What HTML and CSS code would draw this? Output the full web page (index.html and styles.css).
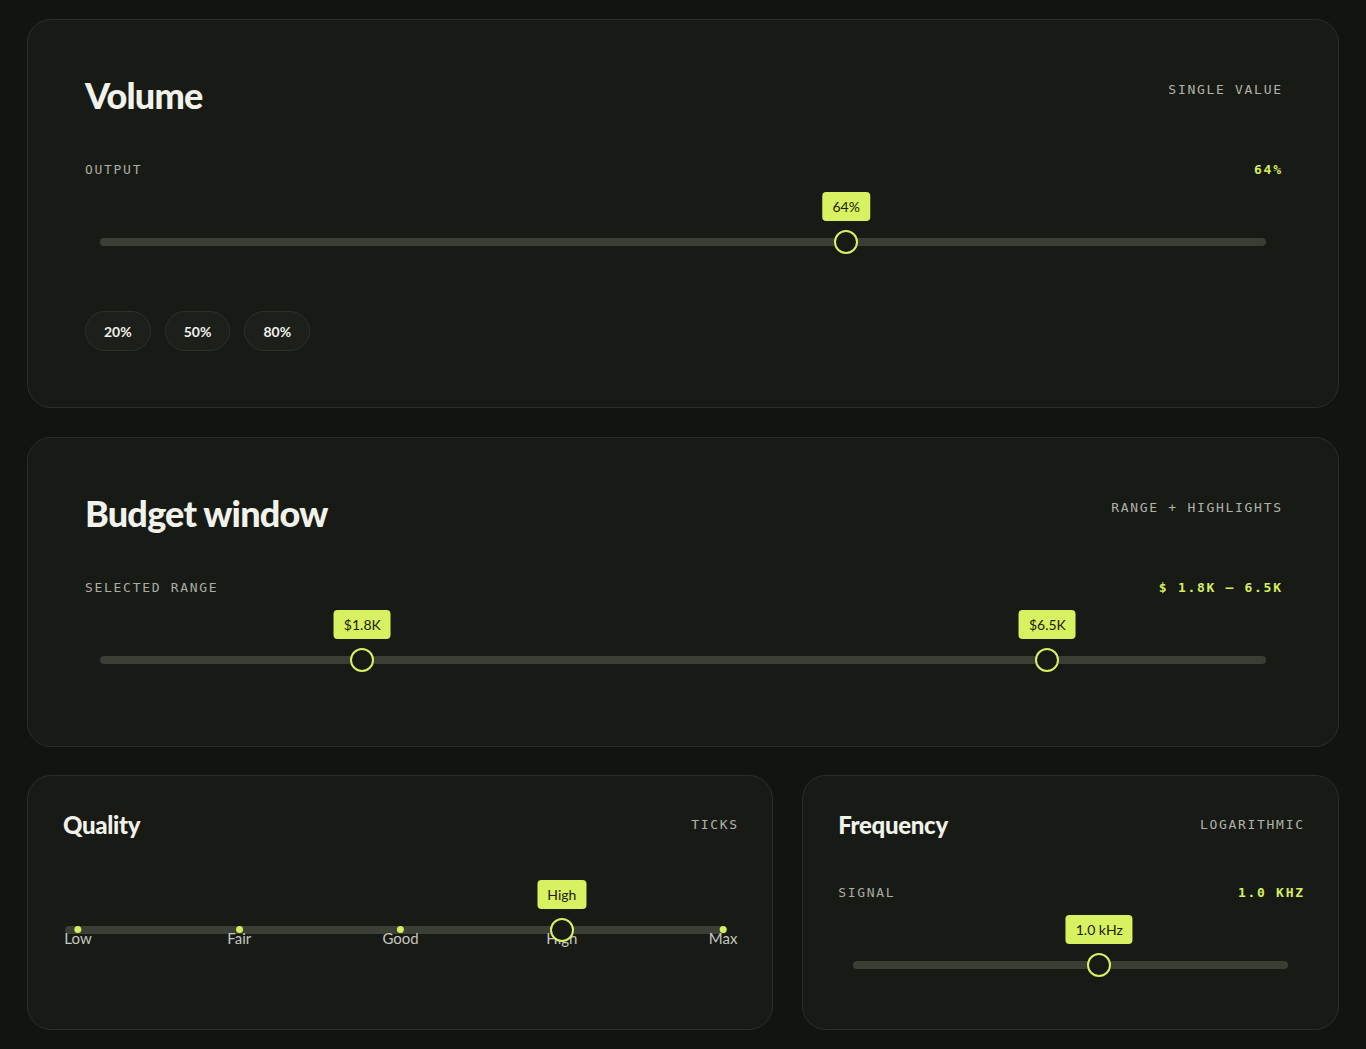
FILE: index.html
```html
<!DOCTYPE html>
<html lang="en">
  <head>
    <meta charset="UTF-8" />
    <meta name="viewport" content="width=device-width, initial-scale=1.0" />
    <title>Sliders</title>
    <link rel="stylesheet" href="styles.css">
  </head>
  <body>
    <main class="page">
      <!-- single value -->
      <section class="card card-lg">
        <header class="card-head">
          <h2 class="card-title">Volume</h2>
          <span class="card-tag">Single value</span>
        </header>
        <div class="readout">
          <span class="readout-label">Output</span>
          <span class="readout-value">64%</span>
        </div>
        <div class="slider">
          <div class="track">
            <div class="thumb" style="left: 64%"><span class="bubble">64%</span></div>
          </div>
        </div>
        <div class="presets">
          <button class="chip">20%</button>
          <button class="chip">50%</button>
          <button class="chip">80%</button>
        </div>
      </section>

      <!-- range -->
      <section class="card card-lg">
        <header class="card-head">
          <h2 class="card-title">Budget window</h2>
          <span class="card-tag">Range + highlights</span>
        </header>
        <div class="readout">
          <span class="readout-label">Selected range</span>
          <span class="readout-value">$ 1.8K &mdash; 6.5K</span>
        </div>
        <div class="slider">
          <div class="track">
            <div class="thumb" style="left: 22.5%"><span class="bubble">$1.8K</span></div>
            <div class="thumb" style="left: 81.25%"><span class="bubble">$6.5K</span></div>
          </div>
        </div>
      </section>

      <div class="row">
        <!-- ticks -->
        <section class="card card-sm">
          <header class="card-head">
            <h2 class="card-title">Quality</h2>
            <span class="card-tag">Ticks</span>
          </header>
          <div class="slider-ticks">
            <div class="rail"></div>
            <div class="stops">
              <div class="stop" style="left: 0%"><i class="dot"></i><span>Low</span></div>
              <div class="stop" style="left: 25%"><i class="dot"></i><span>Fair</span></div>
              <div class="stop" style="left: 50%"><i class="dot"></i><span>Good</span></div>
              <div class="stop" style="left: 75%"><i class="dot"></i><span>High</span></div>
              <div class="stop" style="left: 100%"><i class="dot"></i><span>Max</span></div>
              <div class="thumb" style="left: 75%"><span class="bubble">High</span></div>
            </div>
          </div>
        </section>

        <!-- log -->
        <section class="card card-sm">
          <header class="card-head">
            <h2 class="card-title">Frequency</h2>
            <span class="card-tag">Logarithmic</span>
          </header>
          <div class="readout">
            <span class="readout-label">Signal</span>
            <span class="readout-value">1.0 kHz</span>
          </div>
          <div class="slider">
            <div class="track">
              <div class="thumb" style="left: 56.6%"><span class="bubble">1.0 kHz</span></div>
            </div>
          </div>
        </section>
      </div>
    </main>
  </body>
</html>
```

FILE: styles.css
```css
* {
  box-sizing: border-box;
}
body {
  margin: 0;
  background: #121411;
  color: #eeefe8;
  font-family: Lato, "Noto Sans", sans-serif;
}
.page {
  display: flex;
  flex-direction: column;
  gap: 29px;
  padding: 19px 27px;
}
.row {
  display: grid;
  grid-template-columns: 1.39fr 1fr;
  gap: 29px;
  margin-top: -1px;
}
.card {
  background: #181a16;
  border: 1px solid #2b2e28;
  border-radius: 24px;
}
.card-lg {
  padding: 55px 57px 56px;
}
.card-sm {
  padding: 35px 35px 34px;
}
.card-head {
  display: flex;
  justify-content: space-between;
  align-items: flex-start;
}
.card-title {
  margin: 0;
  font-size: 36px;
  line-height: 40px;
  font-weight: 900;
  letter-spacing: -0.8px;
  color: #f1f2ea;
}
.card-sm .card-head {
  align-items: center;
}
.card-sm .card-title {
  font-size: 24px;
  line-height: 28px;
  letter-spacing: -0.3px;
}
.card-tag,
.readout {
  font-family: "DejaVu Sans Mono", "Liberation Mono", monospace;
  font-size: 13px;
  line-height: 18px;
  letter-spacing: 1.7px;
  text-transform: uppercase;
}
.card-tag {
  color: #b0b3aa;
  margin-right: -1.7px;
}
.card-lg .card-tag {
  margin-top: 6px;
}
.readout {
  display: flex;
  justify-content: space-between;
  margin-top: 46px;
  color: #aaada3;
}
.card-sm .readout {
  margin-top: 45px;
}
.readout-value {
  color: #d5ee5e;
  font-weight: bold;
  margin-right: -1.7px;
}

/* slider */
.slider {
  padding: 59px 15px 26px;
}
.track {
  position: relative;
  height: 8px;
  border-radius: 4px;
  background: #3a3e35;
}
.thumb {
  position: absolute;
  top: 50%;
  width: 24px;
  height: 24px;
  border: 2px solid #d8f064;
  border-radius: 50%;
  background: #181a16;
  transform: translate(-50%, -50%);
  z-index: 2;
}
.bubble {
  position: absolute;
  left: 50%;
  bottom: calc(100% + 11px);
  transform: translateX(-50%);
  height: 29px;
  padding: 0 10px;
  border-radius: 4px;
  background: #d7f160;
  color: #1d2010;
  font-size: 14px;
  line-height: 29px;
  white-space: nowrap;
}

.presets {
  display: flex;
  gap: 14px;
  margin-top: 39px;
}
.chip {
  height: 40px;
  padding: 0 18px;
  border: 1px solid #2d312a;
  border-radius: 20px;
  background: #1c1f1a;
  color: #f0f1ea;
  font-family: Lato, "Noto Sans", sans-serif;
  font-size: 14px;
  font-weight: bold;
  cursor: pointer;
}

/* ticks */
.slider-ticks {
  position: relative;
  padding-top: 87px;
}
.rail {
  height: 8px;
  margin: 0 10px 0 2px;
  border-radius: 4px;
  background: #3b3f36;
}
.stops {
  position: absolute;
  left: 15px;
  right: 14px;
  top: 87px;
  height: 8px;
}
.stop {
  position: absolute;
  top: 0;
  display: flex;
  flex-direction: column;
  align-items: center;
  transform: translateX(-50%);
}
.dot {
  width: 7px;
  height: 7px;
  border-radius: 50%;
  background: #d5ee5e;
}
.stop span {
  margin-top: -4px;
  font-size: 15px;
  line-height: 18px;
  color: #c4c7bd;
}
```
